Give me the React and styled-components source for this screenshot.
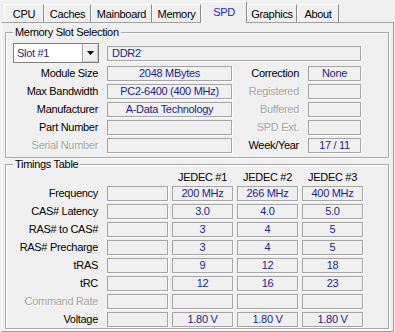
import React from "react";
import styled, { createGlobalStyle } from "styled-components";

const GlobalStyle = createGlobalStyle`
  html, body {
    margin: 0;
    padding: 0;
    background: #f0f0f0;
  }
  body {
    font-family: "Liberation Sans", Arial, sans-serif;
    font-size: 11px;
    letter-spacing: -0.3px;
    color: #000;
  }
`;

const Window = styled.div`
  width: 395px;
  height: 332px;
  overflow: hidden;
  background: #f0f0f0;
`;

const TabBar = styled.div`
  display: flex;
  align-items: flex-end;
  height: 22px;
  padding-left: 4px;
  position: relative;
  z-index: 1;
`;

const Tab = styled.div`
  width: ${(p) => p.$w}px;
  height: ${(p) => (p.$active ? 22 : 18)}px;
  margin-bottom: ${(p) => (p.$active ? -1 : 0)}px;
  box-sizing: border-box;
  display: flex;
  align-items: center;
  justify-content: center;
  padding-bottom: ${(p) => (p.$active ? 2 : 0)}px;
  background: #f0f0f0;
  border-top: 1px solid #fff;
  border-left: 1px solid #fff;
  border-right: 1px solid #8a8a8a;
  color: ${(p) => (p.$active ? "#2323c8" : "#000")};
  white-space: nowrap;
`;

const Panel = styled.div`
  margin-left: 1px;
  width: 393px;
  height: 310px;
  box-sizing: border-box;
  border: 1px solid #a0a0a0;
  border-left-color: #fff;
  padding: 3px 0 0 3px;
`;

const GroupBox = styled.fieldset`
  margin: 0;
  width: 384px;
  min-inline-size: 0;
  box-sizing: border-box;
  padding: ${(p) => p.$pad};
  border: 1px solid #a8a8a8;
  box-shadow: inset 1px 1px 0 #fff, 1px 1px 0 #fff;
`;

const Legend = styled.legend`
  padding: 0 2px;
  line-height: 13px;
  background: #f0f0f0;
`;

const SlotGrid = styled.div`
  display: grid;
  grid-template-columns: 86px 125px 60px 53px;
  grid-template-rows: 20px repeat(5, 15px);
  column-gap: 8px;
  row-gap: 3px;
`;

const TimingGrid = styled.div`
  display: grid;
  grid-template-columns: 90px repeat(4, 61px);
  grid-template-rows: 12px repeat(8, 15px);
  column-gap: 4px;
  row-gap: 3px;
`;

const Label = styled.div`
  align-self: center;
  text-align: right;
  padding-right: ${(p) => p.$pr || 1}px;
  line-height: 13px;
  white-space: nowrap;
  color: ${(p) => (p.$disabled ? "#a3a3a3" : "#000")};
  text-shadow: ${(p) => (p.$disabled ? "1px 1px 0 #fff" : "none")};
`;

const Field = styled.div`
  align-self: center;
  grid-column: ${(p) => p.$span || "auto"};
  height: 15px;
  box-sizing: border-box;
  border: 1px solid #a5a5a5;
  box-shadow: 1px 1px 0 #fff;
  display: flex;
  align-items: center;
  justify-content: ${(p) => (p.$left ? "flex-start" : "center")};
  padding: 0 4px;
  line-height: 13px;
  color: #1e1e8a;
  white-space: nowrap;
  overflow: hidden;
`;

const HeadCell = styled.div`
  text-align: center;
  line-height: 12px;
  white-space: nowrap;
`;

const Combo = styled.div`
  display: flex;
  height: 20px;
  box-sizing: border-box;
  border: 1px solid #7f7f7f;
  background: #fff;
`;

const ComboText = styled.div`
  flex: 1;
  display: flex;
  align-items: center;
  padding-left: 3px;
  color: #1e1e8a;
`;

const ComboButton = styled.div`
  width: 16px;
  box-sizing: border-box;
  display: flex;
  align-items: center;
  justify-content: center;
  background: #f0f0f0;
  border-left: 1px solid #a0a0a0;
  box-shadow: inset 1px 1px 0 #fff, inset -1px -1px 0 #c8c8c8;
`;

const tabs = [
  { name: "CPU", w: 40 },
  { name: "Caches", w: 47 },
  { name: "Mainboard", w: 61 },
  { name: "Memory", w: 49 },
  { name: "SPD", w: 46, active: true },
  { name: "Graphics", w: 50 },
  { name: "About", w: 42 },
];

const slotRows = [
  ["Module Size", "2048 MBytes", "Correction", "None", false, false],
  ["Max Bandwidth", "PC2-6400 (400 MHz)", "Registered", "", false, true],
  ["Manufacturer", "A-Data Technology", "Buffered", "", false, true],
  ["Part Number", "", "SPD Ext.", "", false, true],
  ["Serial Number", "", "Week/Year", "17 / 11", true, false],
];

const timings = [
  ["Frequency", "200 MHz", "266 MHz", "400 MHz"],
  ["CAS# Latency", "3.0", "4.0", "5.0"],
  ["RAS# to CAS#", "3", "4", "5"],
  ["RAS# Precharge", "3", "4", "5"],
  ["tRAS", "9", "12", "18"],
  ["tRC", "12", "16", "23"],
  ["Command Rate", "", "", "", true],
  ["Voltage", "1.80 V", "1.80 V", "1.80 V"],
];

const App = () => {
  return (
    <Window>
      <GlobalStyle />
      <TabBar>
        {tabs.map((t) => (
          <Tab key={t.name} $w={t.w} $active={t.active}>
            {t.name}
          </Tab>
        ))}
      </TabBar>
      <Panel>
        <GroupBox $pad="4px 0 4px 7px">
          <Legend>Memory Slot Selection</Legend>
          <SlotGrid>
            <Combo>
              <ComboText>Slot #1</ComboText>
              <ComboButton>
                <svg width="7" height="4" viewBox="0 0 7 4">
                  <path d="M0 0h7L3.5 4z" fill="#000" />
                </svg>
              </ComboButton>
            </Combo>
            <Field $span="2 / 5" $left>DDR2</Field>
            {slotRows.map(([l1, v1, l2, v2, d1, d2]) => (
              <React.Fragment key={l1}>
                <Label $disabled={d1}>{l1}</Label>
                <Field>{v1}</Field>
                <Label $disabled={d2}>{l2}</Label>
                <Field>{v2}</Field>
              </React.Fragment>
            ))}
          </SlotGrid>
        </GroupBox>
        <GroupBox $pad="0 0 1px 7px">
          <Legend>Timings Table</Legend>
          <TimingGrid>
            <div />
            <div />
            <HeadCell>JEDEC #1</HeadCell>
            <HeadCell>JEDEC #2</HeadCell>
            <HeadCell>JEDEC #3</HeadCell>
            {timings.map(([label, a, b, c, off]) => (
              <React.Fragment key={label}>
                <Label $pr={5} $disabled={off}>{label}</Label>
                <Field />
                <Field>{a}</Field>
                <Field>{b}</Field>
                <Field>{c}</Field>
              </React.Fragment>
            ))}
          </TimingGrid>
        </GroupBox>
      </Panel>
    </Window>
  );
};

export default App;
